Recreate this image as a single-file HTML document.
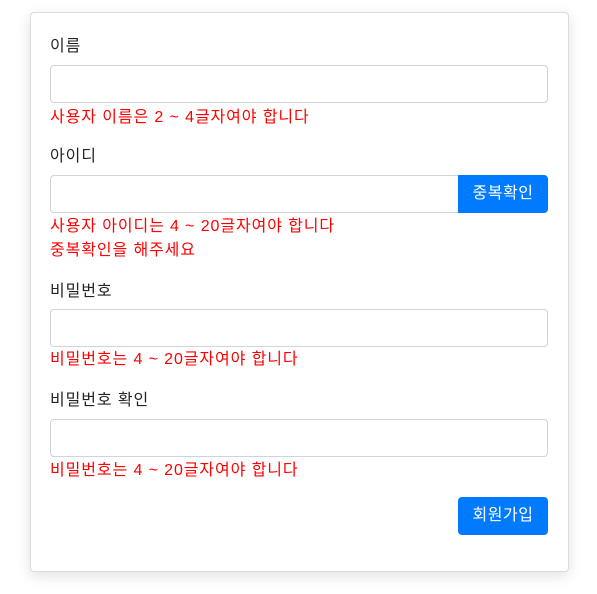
<!DOCTYPE html>
<html><head><meta charset="utf-8"><style>
html,body{margin:0;padding:0;width:597px;height:594px;background:#fff;overflow:hidden;font-family:"Liberation Sans","Noto Sans CJK KR",sans-serif;font-size:16px;color:#212529}
.card{position:absolute;left:30px;top:12px;width:537px;height:558px;border:1px solid #dcdcdc;border-radius:4px;background:#fff;box-shadow:0 4px 14px rgba(0,0,0,.12)}
.a{position:absolute;left:50px;line-height:24px;white-space:nowrap;letter-spacing:0.9px}
.err{color:#ff0000}
.in{position:absolute;left:50px;width:496px;height:36px;border:1px solid #ced4da;border-radius:4px;background:#fff}
.btn{position:absolute;background:#007bff;color:#fff;border-radius:4px;text-align:center;line-height:38px;height:38px;letter-spacing:0.5px}
</style></head><body>
<div class="card"></div>
<div class="a" style="top:35px">이름</div>
<div class="in" style="top:65px"></div>
<div class="a err" style="top:106px">사용자 이름은 2 ~ 4글자여야 합니다</div>
<div class="a" style="top:145px">아이디</div>
<div class="in" style="top:175px;width:408px;border-radius:4px 0 0 4px"></div>
<div class="btn" style="left:458px;top:175px;width:90px;border-radius:0 4px 4px 0">중복확인</div>
<div class="a err" style="top:215px">사용자 아이디는 4 ~ 20글자여야 합니다</div>
<div class="a err" style="top:239px">중복확인을 해주세요</div>
<div class="a" style="top:280px">비밀번호</div>
<div class="in" style="top:309px"></div>
<div class="a err" style="top:348px">비밀번호는 4 ~ 20글자여야 합니다</div>
<div class="a" style="top:389px">비밀번호 확인</div>
<div class="in" style="top:419px"></div>
<div class="a err" style="top:459px">비밀번호는 4 ~ 20글자여야 합니다</div>
<div class="btn" style="left:458px;top:497px;width:90px">회원가입</div>
</body></html>
